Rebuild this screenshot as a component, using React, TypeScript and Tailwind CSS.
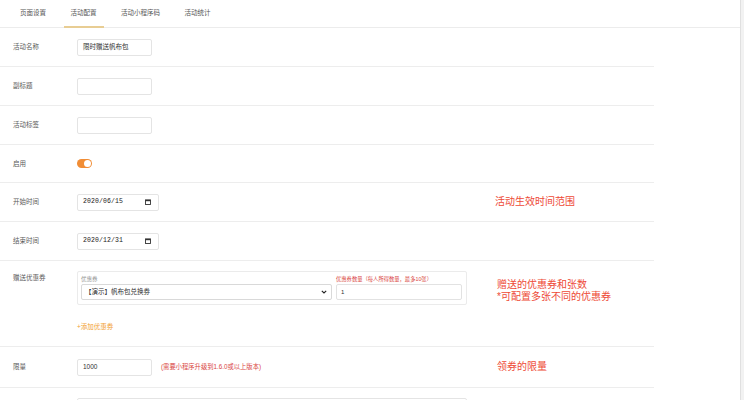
import React from "react";

const FONT = "font-['Liberation_Sans','Noto_Sans_CJK_SC',sans-serif]";

function Label({ children, className = "" }: { children: React.ReactNode; className?: string }) {
  return <div className={`text-[6.5px] leading-[8px] text-[#5a5a5a] ${className}`}>{children}</div>;
}

function TextBox({ value = "", className = "w-[75px]" }: { value?: string; className?: string }) {
  return (
    <div className={`h-[17px] border border-[#e4e4e4] rounded-[2px] bg-white flex items-center pl-[5px] text-[6.5px] text-[#333333] ${className}`}>
      {value}
    </div>
  );
}

function DateBox({ value }: { value: string }) {
  return (
    <div className="w-[82px] h-[17px] border border-[#e4e4e4] rounded-[2px] bg-white flex items-center justify-between pl-[5px] pr-[7px]">
      <span className="font-['Liberation_Mono',monospace] text-[6.5px] text-[#222222] tracking-[0.1px]">{value}</span>
      <svg width="6" height="6" viewBox="0 0 6 6">
        <rect x="0.5" y="0.9" width="5" height="4.6" fill="none" stroke="#333" strokeWidth="0.9" />
        <rect x="0.5" y="0.9" width="5" height="1.3" fill="#333" />
      </svg>
    </div>
  );
}

function Note({ children }: { children: React.ReactNode }) {
  return <div className="text-[10px] leading-[12px] text-[#ee4a36]">{children}</div>;
}

export default function App() {
  return (
    <div className={`w-[744px] h-[400px] overflow-hidden bg-white flex ${FONT}`}>
      <div className="flex-1 min-w-0 flex flex-col">
        {/* tabs */}
        <div className="h-[28px] shrink-0 border-b border-[#ececec] flex items-stretch pl-[13px] gap-[10.5px]">
          <div className="px-[7px] flex items-center text-[6.5px] text-[#555555] pb-[1px]">页面设置</div>
          <div className="px-[7px] flex items-center text-[6.5px] text-[#555555] border-b-2 border-[#e8cd93] -mb-px">活动配置</div>
          <div className="px-[7px] flex items-center text-[6.5px] text-[#555555] pb-[1px]">活动小程序码</div>
          <div className="px-[7px] flex items-center text-[6.5px] text-[#555555] pb-[1px]">活动统计</div>
        </div>

        <div className="w-[654px]">
          {/* 活动名称 */}
          <div className="h-[39px] grid grid-cols-[64px_418px_1fr] items-center pl-[13px] border-b border-[#ededed]">
            <Label>活动名称</Label>
            <TextBox value="限时赠送帆布包" />
            <div />
          </div>
          {/* 副标题 */}
          <div className="h-[39px] grid grid-cols-[64px_418px_1fr] items-center pl-[13px] border-b border-[#ededed]">
            <Label>副标题</Label>
            <TextBox />
            <div />
          </div>
          {/* 活动标签 */}
          <div className="h-[39px] grid grid-cols-[64px_418px_1fr] items-center pl-[13px] border-b border-[#ededed]">
            <Label>活动标签</Label>
            <TextBox />
            <div />
          </div>
          {/* 启用 */}
          <div className="h-[38px] grid grid-cols-[64px_418px_1fr] items-center pl-[13px] border-b border-[#ededed]">
            <Label>启用</Label>
            <div className="w-[15px] h-[9px] rounded-full bg-[#f18d35] flex items-center justify-end pr-[1px]">
              <div className="w-[7px] h-[7px] rounded-full bg-white" />
            </div>
            <div />
          </div>
          {/* 开始时间 */}
          <div className="h-[39px] grid grid-cols-[64px_418px_1fr] items-center pl-[13px] border-b border-[#ededed]">
            <Label>开始时间</Label>
            <DateBox value="2020/06/15" />
            <Note>活动生效时间范围</Note>
          </div>
          {/* 结束时间 */}
          <div className="h-[39px] grid grid-cols-[64px_418px_1fr] items-center pl-[13px] border-b border-[#ededed]">
            <Label>结束时间</Label>
            <DateBox value="2020/12/31" />
            <div />
          </div>
          {/* 赠送优惠券 */}
          <div className="h-[86px] grid grid-cols-[64px_418px_1fr] items-start pl-[13px] border-b border-[#ededed]">
            <Label className="pt-[13px]">赠送优惠券</Label>
            <div className="pt-[10px] flex flex-col items-start">
              <div className="w-[390px] h-[34px] border border-[#ebebeb] rounded-[2px] pl-[3px] pr-[3px] pt-[3px] flex gap-[4px]">
                <div className="w-[251px] flex flex-col">
                  <div className="text-[5.5px] leading-[8px] text-[#999999]">优惠券</div>
                  <div className="mt-[1px] h-[16px] border border-[#d9d9d9] rounded-[2px] flex items-center justify-between pl-[3px] pr-[4px]">
                    <span className="text-[6.5px] text-[#333333]">【演示】帆布包兑换券</span>
                    <svg width="6" height="4" viewBox="0 0 6 4">
                      <path d="M0.8 0.8 L3 3 L5.2 0.8" fill="none" stroke="#222" strokeWidth="1.1" />
                    </svg>
                  </div>
                </div>
                <div className="w-[126px] flex flex-col">
                  <div className="text-[5.3px] leading-[8px] text-[#d9463f] whitespace-nowrap">优惠券数量（每人所得数量，最多10张）</div>
                  <div className="mt-[1px] h-[16px] border border-[#e2e2e2] rounded-[2px] flex items-center pl-[4px] text-[6px] text-[#333333]">1</div>
                </div>
              </div>
              <div className="mt-[18px] text-[6.5px] leading-[8px] text-[#f2a02f]">+添加优惠券</div>
            </div>
            <div className="pt-[18px] pl-[2px]">
              <Note>赠送的优惠券和张数</Note>
              <Note>*可配置多张不同的优惠券</Note>
            </div>
          </div>
          {/* 限量 */}
          <div className="h-[41px] grid grid-cols-[64px_418px_1fr] items-center pl-[13px] border-b border-[#ededed]">
            <Label>限量</Label>
            <div className="flex items-center gap-[9px]">
              <TextBox value="1000" />
              <span className="text-[6.3px] text-[#d9463f] whitespace-nowrap">(需要小程序升级到1.6.0或以上版本)</span>
            </div>
            <div className="pl-[2px]">
              <Note>领券的限量</Note>
            </div>
          </div>
          {/* partial next row */}
          <div className="grid grid-cols-[64px_418px_1fr] pl-[13px] pt-[10px]">
            <Label> </Label>
            <TextBox className="w-[390px]" />
            <div />
          </div>
        </div>
      </div>
      <div className="w-[4px] shrink-0 bg-[#f2f2f2] border-l border-[#e0e0e0]" />
    </div>
  );
}
